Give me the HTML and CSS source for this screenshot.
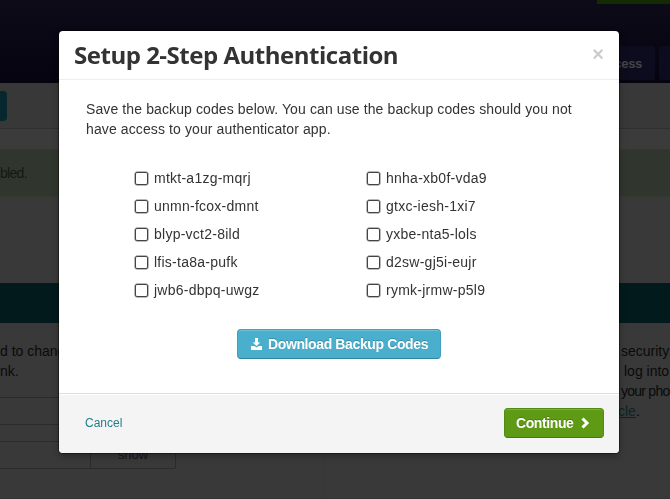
FILE: index.html
```html
<!DOCTYPE html>
<html lang="en">
<head>
    <meta charset="UTF-8">
    <meta name="viewport" content="width=device-width, initial-scale=1.0">
    <title>Setup 2-Step Authentication</title>
    <link rel="stylesheet" href="styles.css">
</head>
<body>
    <div class="page">
        <header class="top">
            <div class="top-accent"></div>
            <nav class="tabs">
                <a class="tab">cess</a>
                <a class="tab tab-next"></a>
            </nav>
        </header>
        <div class="toolbar"><span class="pill"></span></div>
        <div class="spacer"></div>
        <div class="alert">bled.</div>
        <div class="gap"></div>
        <div class="panel-title"></div>
        <div class="columns">
            <div class="col-left">
                <p>d to chang<br>nk.</p>
                <div class="field"></div>
                <div class="field-row">
                    <div class="field-input"></div>
                    <div class="show">show</div>
                </div>
            </div>
            <div class="col-right">
                <p>security<br><span class="log">log into</span><br><span class="phone">your pho</span><br><a class="article">cle</a>.</p>
            </div>
        </div>
    </div>

    <div class="modal">
        <div class="modal-header">
            <h3>Setup 2-Step Authentication</h3>
            <span class="close">&times;</span>
        </div>
        <div class="modal-body">
            <p>Save the backup codes below. You can use the backup codes should you not<br>have access to your authenticator app.</p>
            <div class="codes">
                <ul>
                    <li><i class="box"></i><span>mtkt-a1zg-mqrj</span></li>
                    <li><i class="box"></i><span>unmn-fcox-dmnt</span></li>
                    <li><i class="box"></i><span>blyp-vct2-8ild</span></li>
                    <li><i class="box"></i><span>lfis-ta8a-pufk</span></li>
                    <li><i class="box"></i><span>jwb6-dbpq-uwgz</span></li>
                </ul>
                <ul>
                    <li><i class="box"></i><span>hnha-xb0f-vda9</span></li>
                    <li><i class="box"></i><span>gtxc-iesh-1xi7</span></li>
                    <li><i class="box"></i><span>yxbe-nta5-lols</span></li>
                    <li><i class="box"></i><span>d2sw-gj5i-eujr</span></li>
                    <li><i class="box"></i><span>rymk-jrmw-p5l9</span></li>
                </ul>
            </div>
            <a class="btn btn-info">
                <svg width="11" height="12" viewBox="0 0 11 12"><path fill="#fff" d="M4 0h3v4.500h2.300L5.500 8 1.700 4.500H4zM0 8h3.300l2.200 1.500L7.700 8H11v4H0z"/></svg>
                <span>Download Backup Codes</span>
            </a>
        </div>
        <div class="modal-footer">
            <a class="cancel">Cancel</a>
            <a class="btn btn-success">
                <span>Continue</span>
                <svg width="9" height="12" viewBox="0 0 9 12"><path fill="none" stroke="#fff" stroke-width="3" d="M1.500 1.500L6 6l-4.500 4.500"/></svg>
            </a>
        </div>
    </div>
</body>
</html>
```
FILE: styles.css
```css
* {
    margin: 0;
    padding: 0;
    box-sizing: border-box;
}

body {
    font-family: "Liberation Sans", Arial, sans-serif;
    font-size: 14px;
    line-height: 20px;
    color: #333;
    background: #393939;
    overflow: hidden;
}

/* Page behind the dialog */
.page {
    width: 670px;
    height: 499px;
    overflow: hidden;
    color: #0a0a0a;
    border-bottom: 1px solid #343234;
}

.top {
    height: 83px;
    display: flex;
    flex-direction: column;
    justify-content: space-between;
    align-items: flex-end;
    padding-bottom: 3px;
    background: linear-gradient(#0d0b18, #04030f);
}

.top-accent {
    width: 73px;
    height: 4px;
    background: #132a02;
}

.tabs {
    display: flex;
    gap: 4px;
}

.tab {
    width: 60px;
    height: 34px;
    padding-right: 13px;
    border-radius: 2px;
    background: #0d0c1e;
    color: #444;
    font-weight: bold;
    font-size: 13px;
    line-height: 35px;
    letter-spacing: -0.3px;
    text-align: right;
}

.tab-next {
    width: 11px;
    padding: 0;
    border-radius: 2px 0 0 2px;
}

.toolbar {
    height: 46px;
    padding-top: 8px;
    border-bottom: 1px solid #2f2f2f;
    background: #383838;
}

.pill {
    display: block;
    width: 7px;
    height: 30px;
    border-radius: 0 4px 4px 0;
    background: #06272d;
}

.spacer {
    height: 20px;
    background: #3b3b3b;
}

.alert {
    height: 48px;
    border: solid #35382f;
    border-width: 1px 0;
    background: #30362d;
    color: #101b10;
    line-height: 47px;
    letter-spacing: -0.7px;
}

.gap {
    height: 86px;
}

.panel-title {
    height: 40px;
    background: #031a1d;
}

.columns {
    display: flex;
    padding-top: 18px;
}

.col-left {
    flex: none;
    width: 324px;
    height: 158px;
    border-right: 1px solid #373737;
}

.col-left p {
    white-space: nowrap;
}

.field {
    width: 176px;
    height: 28px;
    margin-top: 16px;
    border: solid #2b2b2b;
    border-width: 1px 0;
}

.field-row {
    display: flex;
    width: 176px;
    height: 28px;
    margin-top: 16px;
}

.field-input {
    width: 90px;
    border: solid #2b2b2b;
    border-width: 1px 0;
}

.show {
    flex: 1;
    border: 1px solid #2b2b2b;
    border-radius: 0 2px 2px 0;
    color: #15151f;
    font-size: 13px;
    line-height: 26px;
    text-align: center;
}

.col-right {
    padding-left: 297px;
    white-space: nowrap;
}

.log {
    margin-left: 3px;
}

.phone {
    letter-spacing: -0.75px;
}

.article {
    margin-left: -3px;
    color: #0a2528;
    text-decoration: underline;
}

/* Dialog */
.modal {
    position: fixed;
    top: 31px;
    left: 59px;
    width: 560px;
    height: 422px;
    display: flex;
    flex-direction: column;
    border-radius: 4px;
    background: #fff;
    overflow: hidden;
    box-shadow: 0 0 0 1px rgba(0, 0, 0, 0.4), 0 3px 7px rgba(0, 0, 0, 0.3);
}

.modal-header {
    height: 49px;
    display: flex;
    justify-content: space-between;
    padding: 0 15px;
    border-bottom: 1px solid #eee;
}

.modal-header h3 {
    font-family: "Open Sans", "Trebuchet MS", sans-serif;
    font-size: 24px;
    font-weight: 700;
    line-height: 48px;
    letter-spacing: -0.48px;
    white-space: nowrap;
}

.close {
    color: #ccc;
    font-size: 20px;
    font-weight: bold;
    line-height: 46px;
}

.modal-body {
    flex: 1;
    padding: 19px 27px 0;
    letter-spacing: 0.11px;
    white-space: nowrap;
}

.codes {
    display: flex;
    margin-top: 25px;
    padding-left: 49px;
}

.codes ul {
    flex: none;
    width: 232px;
    letter-spacing: 0.25px;
    list-style: none;
}

.codes li {
    display: flex;
    align-items: center;
    height: 28px;
}

.box {
    width: 13px;
    height: 13px;
    margin: 1px 6px 0 0;
    border: 1px solid #444;
    border-radius: 2px;
    box-shadow: 0 0 0 0.5px #777;
}

.btn {
    display: flex;
    align-items: center;
    height: 30px;
    border: 1px solid;
    border-radius: 4px;
    color: #fff;
    font-weight: bold;
    text-shadow: 0 -1px 0 rgba(0, 0, 0, 0.2);
    box-shadow: inset 0 1px 0 rgba(255, 255, 255, 0.2);
}

.btn-info {
    width: 204px;
    margin: 25px 0 0 151px;
    padding-left: 13px;
    gap: 6px;
    border-color: #3f9fbd #3f9fbd #31859e;
    background: #49afcd;
    letter-spacing: -0.38px;
}

.modal-footer {
    height: 60px;
    display: flex;
    align-items: center;
    justify-content: space-between;
    padding: 0 15px 2px 26px;
    border-top: 1px solid #ddd;
    background: #f4f4f4;
    box-shadow: inset 0 1px 0 #fff;
}

.cancel {
    color: #22808c;
    font-size: 12px;
}

.btn-success {
    width: 100px;
    padding-left: 11px;
    gap: 8px;
    border-color: #4f8c10 #4f8c10 #43780c;
    background: #5e9a14;
    letter-spacing: -0.4px;
}
```
